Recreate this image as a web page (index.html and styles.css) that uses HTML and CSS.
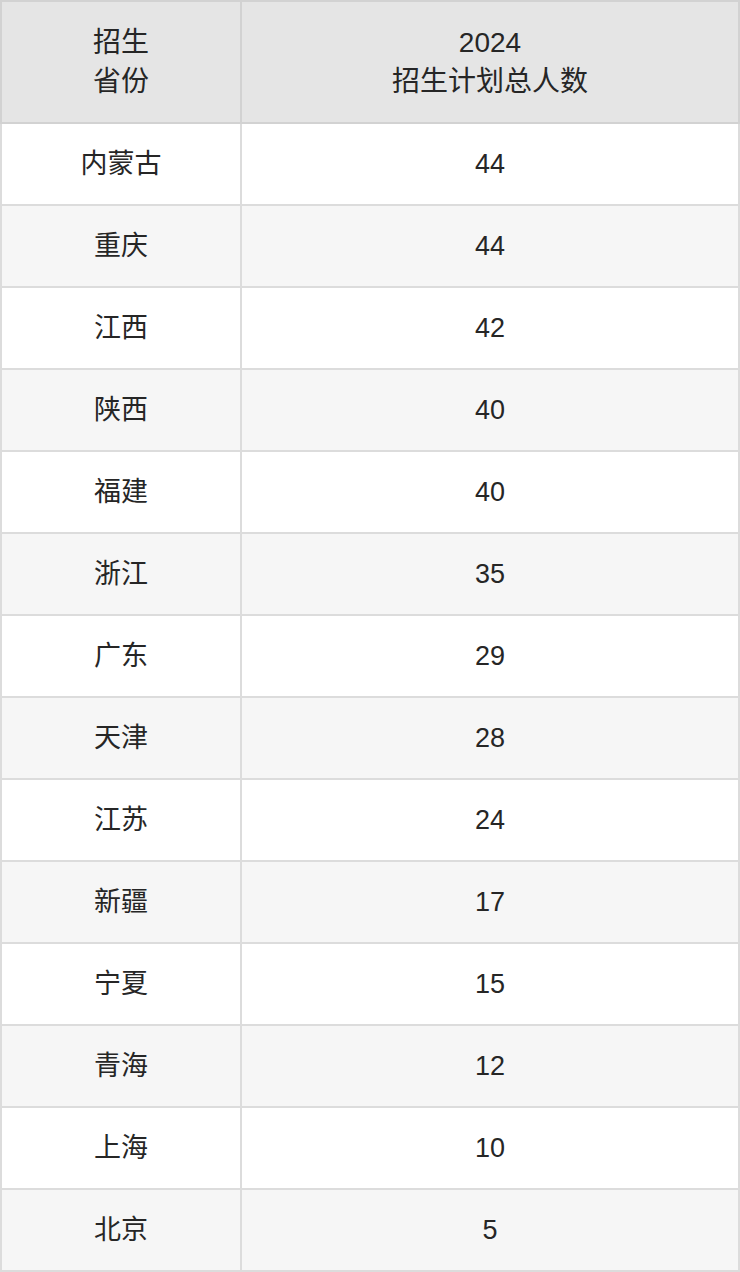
FILE: index.html
```html
<!DOCTYPE html>
<html lang="zh-CN">
<head>
<meta charset="utf-8">
<title>招生计划</title>
<link rel="stylesheet" href="styles.css">
</head>
<body>
<table class="plan">
  <thead>
    <tr><th class="c1">招生<br>省份</th><th class="c2">2024<br>招生计划总人数</th></tr>
  </thead>
  <tbody>
    <tr><td>内蒙古</td><td>44</td></tr>
    <tr><td>重庆</td><td>44</td></tr>
    <tr><td>江西</td><td>42</td></tr>
    <tr><td>陕西</td><td>40</td></tr>
    <tr><td>福建</td><td>40</td></tr>
    <tr><td>浙江</td><td>35</td></tr>
    <tr><td>广东</td><td>29</td></tr>
    <tr><td>天津</td><td>28</td></tr>
    <tr><td>江苏</td><td>24</td></tr>
    <tr><td>新疆</td><td>17</td></tr>
    <tr><td>宁夏</td><td>15</td></tr>
    <tr><td>青海</td><td>12</td></tr>
    <tr><td>上海</td><td>10</td></tr>
    <tr><td>北京</td><td>5</td></tr>
  </tbody>
</table>
</body>
</html>
```
FILE: styles.css
```css
html, body {
  margin: 0;
  padding: 0;
  background: #ffffff;
}
body {
  font-family: "Liberation Sans", "Noto Sans CJK SC", sans-serif;
  color: #262626;
}
.plan {
  width: 740px;
  border-collapse: collapse;
  table-layout: fixed;
  border: 2px solid #d6d6d6;
}
.plan th, .plan td {
  border: 2px solid #dcdcdc;
  text-align: center;
  vertical-align: middle;
  padding: 0;
  font-size: 27px;
  font-weight: normal;
}
.plan th {
  background: #e5e5e5;
  height: 120px;
  line-height: 39px;
  font-size: 28px;
  border-color: #d2d2d2;
}
.plan .c1 {
  width: 238px;
}
.plan td {
  height: 80px;
  line-height: 30px;
}
.plan tbody tr:nth-child(even) td {
  background: #f6f6f6;
}
```
